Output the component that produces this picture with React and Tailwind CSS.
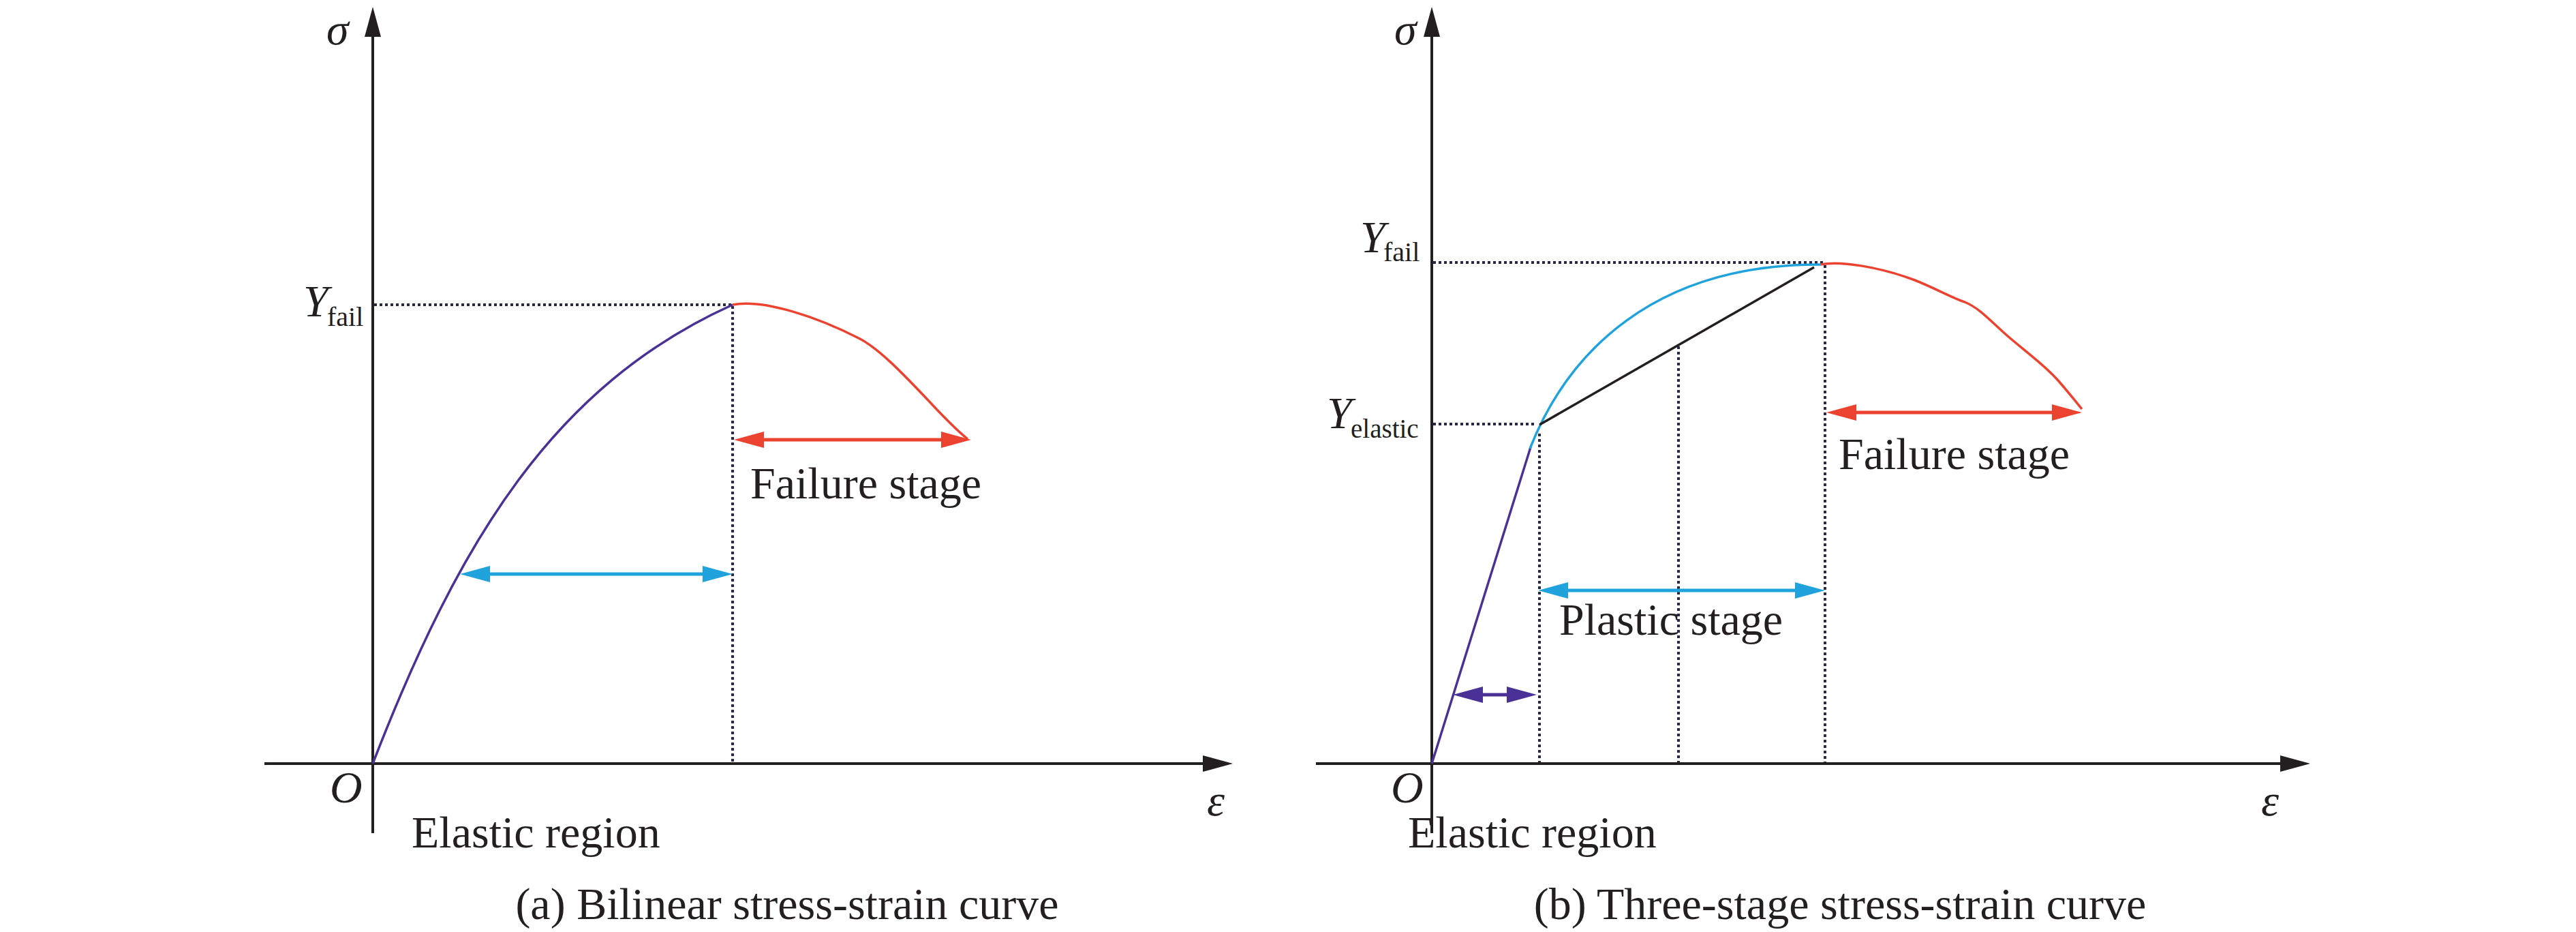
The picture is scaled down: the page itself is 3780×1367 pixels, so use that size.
const INK = "#231f20";
const DOT = "#28284a";
const PURPLE = "#4a3195";
const BLUE = "#20a3dd";
const RED = "#ec4331";

function Arrow({ x1, x2, y, color }) {
  const L = 44;
  const H = 12;
  return (
    <g fill={color}>
      <line x1={x1 + L - 4} x2={x2 - L + 4} y1={y} y2={y} stroke={color} strokeWidth={5} />
      <polygon points={`${x1},${y} ${x1 + L},${y - H} ${x1 + L},${y + H}`} />
      <polygon points={`${x2},${y} ${x2 - L},${y - H} ${x2 - L},${y + H}`} />
    </g>
  );
}

function Axes({ ox, left, right }) {
  return (
    <g fill={INK} stroke={INK}>
      <line x1={ox} x2={ox} y1={50} y2={1222} strokeWidth={4} />
      <polygon stroke="none" points={`${ox},10 ${ox - 12},54 ${ox + 12},54`} />
      <line x1={left} x2={right - 40} y1={1120} y2={1120} strokeWidth={4} />
      <polygon stroke="none" points={`${right},1120 ${right - 44},1108 ${right - 44},1132`} />
    </g>
  );
}

function Dotted({ x1, y1, x2, y2 }) {
  return <line x1={x1} y1={y1} x2={x2} y2={y2} stroke={DOT} strokeWidth={4} strokeDasharray="4 4" />;
}

function Label({ x, y, children, italic, size = 66 }) {
  return (
    <text x={x} y={y} fontSize={size} fontStyle={italic ? "italic" : "normal"} fill={INK}>
      {children}
    </text>
  );
}

function Bilinear() {
  return (
    <svg width="1460" height="1293" viewBox="380 0 1460 1293" className="block">
      <Dotted x1={549} y1={447} x2={1075} y2={447} />
      <Dotted x1={1075} y1={449} x2={1075} y2={1118} />
      <Axes ox={547} left={388} right={1809} />
      <path d="M547,1120 C673,795 811,566 1075,447" fill="none" stroke={PURPLE} strokeWidth={3.5} />
      <path
        d="M1075,447 C1120,438 1200,465 1262,497 C1290,512 1322,545 1360,585 C1385,612 1405,632 1420,644"
        fill="none"
        stroke={RED}
        strokeWidth={3.5}
      />
      <Arrow x1={1077} x2={1425} y={645} color={RED} />
      <Arrow x1={675} x2={1075} y={842} color={BLUE} />

      <Label x={479} y={65} italic>σ</Label>
      <Label x={445} y={464} italic>Y</Label>
      <Label x={480} y={478} size={40}>fail</Label>
      <Label x={484} y={1177} italic>O</Label>
      <Label x={1771} y={1196} italic>ε</Label>
      <Label x={1101} y={731}>Failure stage</Label>
      <Label x={604} y={1243}>Elastic region</Label>
    </svg>
  );
}

function ThreeStage() {
  return (
    <svg width="1520" height="1293" viewBox="1900 0 1520 1293" className="block">
      <Dotted x1={2103} y1={385} x2={2676} y2={385} />
      <Dotted x1={2103} y1={622} x2={2254} y2={622} />
      <Dotted x1={2259} y1={636} x2={2259} y2={1118} />
      <Dotted x1={2463} y1={508} x2={2463} y2={1118} />
      <Dotted x1={2678} y1={389} x2={2678} y2={1118} />
      <Axes ox={2101} left={1931} right={3390} />
      <line x1={2101} y1={1120} x2={2246} y2={656} stroke={PURPLE} strokeWidth={3.5} />
      <path d="M2245,658 C2300,518 2426,387 2672,388" fill="none" stroke={BLUE} strokeWidth={3.5} />
      <line x1={2259} y1={623} x2={2662} y2={392} stroke={INK} strokeWidth={3.5} />
      <path
        d="M2672,388 C2700,382 2760,392 2810,411 C2840,423 2865,437 2883,443 C2905,452 2920,470 2945,492 C2975,518 3000,535 3020,558 C3035,575 3045,588 3055,600"
        fill="none"
        stroke={RED}
        strokeWidth={3.5}
      />
      <Arrow x1={2680} x2={3055} y={605} color={RED} />
      <Arrow x1={2257} x2={2678} y={866} color={BLUE} />
      <Arrow x1={2132} x2={2255} y={1019} color={PURPLE} />

      <Label x={2046} y={65} italic>σ</Label>
      <Label x={1996} y={370} italic>Y</Label>
      <Label x={2030} y={383} size={40}>fail</Label>
      <Label x={1947} y={628} italic>Y</Label>
      <Label x={1982} y={642} size={39}>elastic</Label>
      <Label x={2041} y={1177} italic>O</Label>
      <Label x={3318} y={1196} italic>ε</Label>
      <Label x={2698} y={688}>Failure stage</Label>
      <Label x={2288} y={931}>Plastic stage</Label>
      <Label x={2066} y={1243}>Elastic region</Label>
    </svg>
  );
}

export default function App() {
  return (
    <div className="flex w-[3780px] h-[1367px] bg-white pl-[380px] gap-[60px] font-['Liberation_Serif','Times_New_Roman',serif] text-[#231f20] overflow-hidden">
      <div className="flex flex-col w-[1460px]">
        <Bilinear />
        <p className="pl-[90px] text-center text-[66px] leading-[66px]">(a) Bilinear stress-strain curve</p>
      </div>
      <div className="flex flex-col w-[1520px]">
        <ThreeStage />
        <p className="pl-[80px] text-center text-[66px] leading-[66px]">(b) Three-stage stress-strain curve</p>
      </div>
    </div>
  );
}
